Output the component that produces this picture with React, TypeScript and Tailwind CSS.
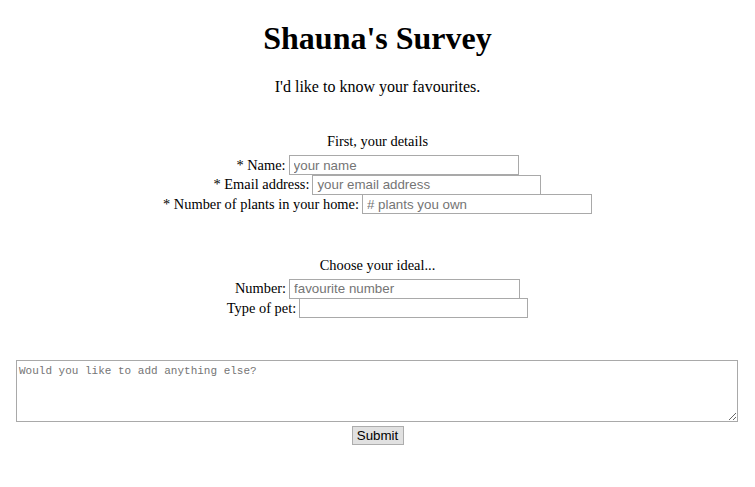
import { useState } from "react";

interface FieldRowProps {
  label: string;
  required?: boolean;
  placeholder?: string;
  width: string;
  height: string;
}

function FieldRow({ label, required, placeholder, width, height }: FieldRowProps) {
  const [value, setValue] = useState("");
  return (
    <div className={`flex items-center gap-[3px] ${height}`}>
      <label className="text-[14.4px] leading-[17px] text-black">
        {required ? "* " : ""}
        {label}:
      </label>
      <input
        value={value}
        onChange={(e) => setValue(e.target.value)}
        placeholder={placeholder}
        className={`${width} h-[20px] border border-[#a9a9a9] bg-white px-[4px] font-['Liberation_Sans',Arial,sans-serif] text-[13.33px] text-black placeholder:text-[#757575] outline-none`}
      />
    </div>
  );
}

export default function App() {
  const [notes, setNotes] = useState("");

  return (
    <div className="flex min-h-[487px] flex-col items-center bg-white font-['Liberation_Serif','Times_New_Roman',serif] text-black">
      <h1 className="mt-[20px] h-[37px] text-[32px] font-bold leading-[37px]">Shauna's Survey</h1>
      <p className="mt-[21px] text-[16px] leading-[18px]">I'd like to know your favourites.</p>

      {/* details */}
      <p className="mt-[37px] text-[14.4px] leading-[17px]">First, your details</p>
      <div className="mt-[5px] flex flex-col items-center">
        <FieldRow label="Name" required placeholder="your name" width="w-[230px]" height="h-[20px]" />
        <FieldRow label="Email address" required placeholder="your email address" width="w-[229px]" height="h-[19px]" />
        <FieldRow label="Number of plants in your home" required placeholder="# plants you own" width="w-[230px]" height="h-[20px]" />
      </div>

      {/* favourites */}
      <p className="mt-[43px] text-[14.4px] leading-[17px]">Choose your ideal...</p>
      <div className="mt-[5px] flex flex-col items-center">
        <FieldRow label="Number" placeholder="favourite number" width="w-[231px]" height="h-[19px]" />
        <FieldRow label="Type of pet" width="w-[229px]" height="h-[20px]" />
      </div>

      <textarea
        value={notes}
        onChange={(e) => setNotes(e.target.value)}
        placeholder="Would you like to add anything else?"
        className="mt-[42px] ml-[16px] h-[62px] w-[722px] self-start border border-[#a9a9a9] bg-white px-[2px] py-[3px] font-['Liberation_Mono','Courier_New',monospace] text-[11px] leading-[15px] text-black placeholder:text-[#757575] outline-none resize"
      />
      <button
        type="submit"
        className="mt-[4px] h-[19px] w-[52px] border border-[#adadad] bg-[#e1e1e1] font-['Liberation_Sans',Arial,sans-serif] text-[13.33px] leading-[17px] text-black"
      >
        Submit
      </button>
    </div>
  );
}
